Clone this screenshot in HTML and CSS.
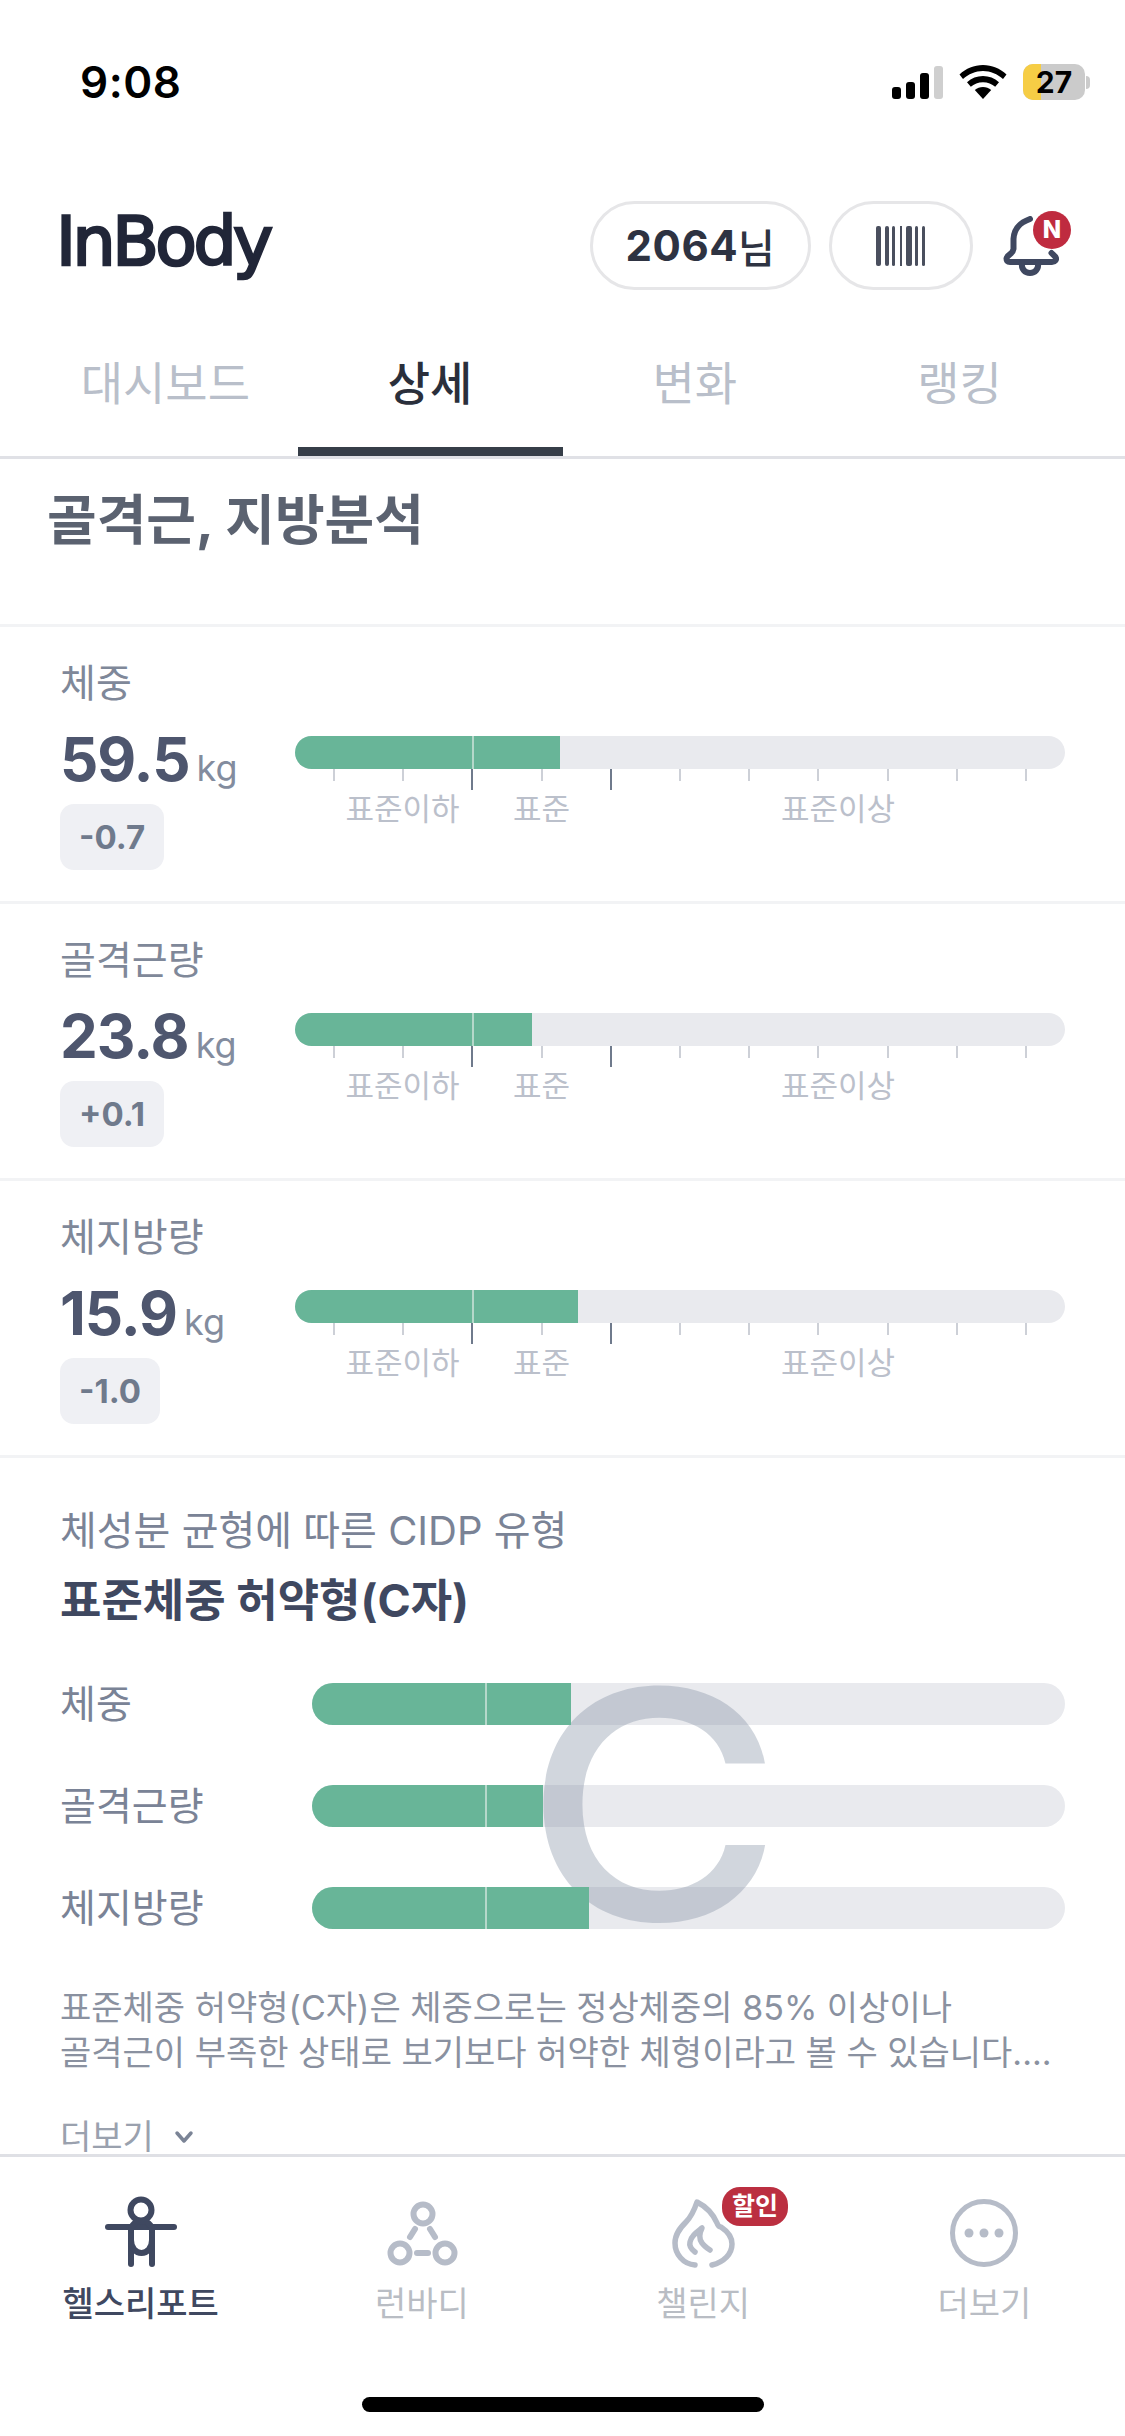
FILE: index.html
```html
<!DOCTYPE html>
<html lang="ko">
<head>
<meta charset="utf-8">
<title>InBody</title>
<link rel="stylesheet" href="styles.css">
</head>
<body>
<div class="screen">
  <div class="status">
    <span class="time">9:08</span>
    <div class="status-icons">
      <svg class="signal" width="52" height="34" viewBox="0 0 52 34"><rect x="0" y="21" width="9" height="12" rx="3"/><rect x="14" y="16" width="9" height="17" rx="3"/><rect x="28" y="7" width="9" height="26" rx="3"/><rect x="42" y="0" width="9" height="33" rx="3" fill="#cfcfcf"/></svg>
      <svg class="wifi" width="48" height="34" viewBox="0 0 48 34"><path d="M24 0C15 0 7 3.500 0.500 9.500L4 14C9.500 9 16.500 6 24 6S38.500 9 44 14L47.500 9.500C41 3.500 33 0 24 0Z"/><path d="M24 11C18 11 12.500 13.200 8 17.300L11.800 21.800C15 19 19.300 17.200 24 17.200S33 19 36.200 21.800L40 17.300C35.500 13.200 30 11 24 11Z"/><path d="M24 22C21 22 18 23 15.800 25L24 34L32.200 25C30 23 27 22 24 22Z"/></svg>
      <div class="battery"><span class="battery-level"></span><span class="battery-num">27</span></div>
      <span class="battery-cap"></span>
    </div>
  </div>

  <header class="top">
    <span class="logo">InBody</span>
    <div class="top-actions">
      <div class="pill pill-name">2064<span class="pill-suffix">님</span></div>
      <div class="pill pill-code">
        <svg width="50" height="40" viewBox="0 0 50 40"><g fill="#4a4f5e"><rect x="0" y="0" width="5" height="40" rx="2"/><rect x="9" y="0" width="4" height="40" rx="2"/><rect x="16" y="0" width="3" height="40" rx="1.500"/><rect x="24" y="0" width="2" height="40"/><rect x="30" y="0" width="6" height="40" rx="2"/><rect x="39" y="0" width="3" height="40" rx="1.500"/><rect x="46" y="0" width="3" height="40" rx="1.500"/></g></svg>
      </div>
      <div class="bell">
        <svg width="56" height="60" viewBox="0 0 56 60" fill="none" stroke="#3f4860" stroke-width="6" stroke-linecap="round" stroke-linejoin="round"><path d="M27 3C16 7 11 13 10.500 23V33C10 38 4 39 3.500 42.500C3.500 45 5 46 7 46H49C52 46 54 43.500 52.500 41C51.500 39.500 50 38.500 48.500 37"/><path d="M19 47C18 53 22 57 27 57S36 53 35 47"/></svg>
        <span class="bell-badge">N</span>
      </div>
    </div>
  </header>

  <nav class="tabs">
    <div class="tab">대시보드</div>
    <div class="tab active">상세</div>
    <div class="tab">변화</div>
    <div class="tab">랭킹</div>
  </nav>

  <main class="content">
    <h1 class="page-title">골격근, 지방분석</h1>

    <section class="metric">
      <div class="metric-label">체중</div>
      <div class="metric-body">
        <div class="metric-left">
          <div class="value"><b>59.5</b><span>kg</span></div>
          <span class="delta">-0.7</span>
        </div>
        <div class="gauge">
          <div class="track"><div class="fill" style="width:265px"></div><span class="mark"></span></div>
          <div class="ticks"><i></i><i></i><i class="major"></i><i></i><i class="major"></i><i></i><i></i><i></i><i></i><i></i><i></i></div>
          <div class="ranges"><span>표준이하</span><span>표준</span><span>표준이상</span></div>
        </div>
      </div>
    </section>

    <section class="metric">
      <div class="metric-label">골격근량</div>
      <div class="metric-body">
        <div class="metric-left">
          <div class="value"><b>23.8</b><span>kg</span></div>
          <span class="delta">+0.1</span>
        </div>
        <div class="gauge">
          <div class="track"><div class="fill" style="width:237px"></div><span class="mark"></span></div>
          <div class="ticks"><i></i><i></i><i class="major"></i><i></i><i class="major"></i><i></i><i></i><i></i><i></i><i></i><i></i></div>
          <div class="ranges"><span>표준이하</span><span>표준</span><span>표준이상</span></div>
        </div>
      </div>
    </section>

    <section class="metric">
      <div class="metric-label">체지방량</div>
      <div class="metric-body">
        <div class="metric-left">
          <div class="value"><b>15.9</b><span>kg</span></div>
          <span class="delta">-1.0</span>
        </div>
        <div class="gauge">
          <div class="track"><div class="fill" style="width:283px"></div><span class="mark"></span></div>
          <div class="ticks"><i></i><i></i><i class="major"></i><i></i><i class="major"></i><i></i><i></i><i></i><i></i><i></i><i></i></div>
          <div class="ranges"><span>표준이하</span><span>표준</span><span>표준이상</span></div>
        </div>
      </div>
    </section>

    <section class="cidp">
      <div class="cidp-label">체성분 균형에 따른 CIDP 유형</div>
      <div class="cidp-title">표준체중 허약형(C자)</div>
      <div class="cidp-chart">
        <div class="cidp-row"><span>체중</span><div class="track track-lg"><div class="fill" style="width:259px"></div><span class="mark"></span></div></div>
        <div class="cidp-row"><span>골격근량</span><div class="track track-lg"><div class="fill" style="width:231px"></div><span class="mark"></span></div></div>
        <div class="cidp-row"><span>체지방량</span><div class="track track-lg"><div class="fill" style="width:277px"></div><span class="mark"></span></div></div>
        <span class="cidp-letter">C</span>
      </div>
      <p class="cidp-desc">표준체중 허약형(C자)은 체중으로는 정상체중의 85% 이상이나<br>골격근이 부족한 상태로 보기보다 허약한 체형이라고 볼 수 있습니다....</p>
      <div class="more">더보기 <svg width="20" height="14" viewBox="0 0 20 14" fill="none" stroke="#7b8496" stroke-width="3.500" stroke-linecap="round" stroke-linejoin="round"><path d="M3 3L10 11L17 3"/></svg></div>
    </section>
  </main>

  <footer class="bottom">
    <div class="nav-item current">
      <svg class="nav-icon" width="80" height="76" viewBox="0 0 80 76" fill="none" stroke="#3f4860" stroke-width="6" stroke-linecap="round" stroke-linejoin="round"><circle cx="40" cy="16" r="10.500"/><path d="M7 33H73"/><path d="M30 36V70"/><path d="M51 36V70"/><path d="M30 36C30 31 35 27 40.500 27S51 31 51 36"/><path d="M30 46C30 54 35 59 40.500 59S51 54 51 46"/></svg>
      <span>헬스리포트</span>
    </div>
    <div class="nav-item">
      <svg class="nav-icon" width="80" height="76" viewBox="0 0 80 76" fill="none" stroke="#b6bcc8" stroke-width="6" stroke-linecap="round"><circle cx="41" cy="20" r="9.500"/><circle cx="18" cy="59" r="9.500"/><circle cx="63" cy="59" r="9.500"/><path d="M33 35L28 43"/><path d="M48 35L53 43"/><path d="M35 59H46"/></svg>
      <span>런바디</span>
    </div>
    <div class="nav-item">
      <div class="nav-icon-wrap">
        <svg class="nav-icon" width="80" height="76" viewBox="0 0 80 76" fill="none" stroke="#b6bcc8" stroke-width="5.500" stroke-linecap="round" stroke-linejoin="round"><path d="M32 71C20 70 12 60 12 49C12 40 17 34 23 28C28 23 31 17 34 8C42 12 50 20 54 29C55 32 56 33 58 33C64 37 69 42 69 50C69 60 61 68 49 71"/><path d="M32 58C28 55 26 52 27 48C28 42 34 38 39 34C36 40 36 45 39 49C41 52 44 54 47 56"/></svg>
        <span class="sale">할인</span>
      </div>
      <span>챌린지</span>
    </div>
    <div class="nav-item">
      <svg class="nav-icon" width="80" height="76" viewBox="0 0 80 76" fill="none" stroke="#b6bcc8" stroke-width="5"><circle cx="40" cy="39" r="31.500"/><g fill="#b6bcc8" stroke="none"><circle cx="25" cy="39" r="4.500"/><circle cx="40" cy="39" r="4.500"/><circle cx="55" cy="39" r="4.500"/></g></svg>
      <span>더보기</span>
    </div>
  </footer>
  <div class="home"><span class="home-bar"></span></div>
</div>
</body>
</html>
```
FILE: styles.css
```css
* { box-sizing: border-box; }
html, body { margin: 0; padding: 0; background: #fff; }
body { font-family: Inter, "Noto Sans CJK KR", "Noto Sans", sans-serif; }
.screen { width: 1125px; height: 2436px; display: flex; flex-direction: column; overflow: hidden; background: #fff; }

.status { height: 163px; flex: none; padding: 60px 35px 0 80px; display: flex; justify-content: space-between; align-items: flex-start; }
.time { font-family: Inter, sans-serif; font-weight: 600; font-size: 44px; line-height: 44px; color: #000; letter-spacing: 0.5px; }
.status-icons { display: flex; align-items: flex-start; padding-top: 4px; }
.signal { margin-top: 2px; fill: #000; }
.wifi { margin: 1px 16px 0 15px; fill: #000; }
.battery { position: relative; width: 62px; height: 36px; border-radius: 10px; background: #cbcbcb; overflow: hidden; display: flex; align-items: center; justify-content: center; }
.battery-level { position: absolute; left: 0; top: 0; bottom: 0; width: 18px; background: #f6cd45; }
.battery-num { position: relative; font-weight: 700; font-size: 30px; line-height: 36px; color: #000; }
.battery-cap { width: 4px; height: 13px; margin: 12px 0 0 1px; background: #cbcbcb; border-radius: 0 6px 6px 0; }

.top { height: 127px; flex: none; margin-top: 19px; padding: 0 66px 0 56px; display: flex; justify-content: space-between; align-items: center; }
.logo { font-family: "DejaVu Sans", sans-serif; font-weight: 400; font-size: 68px; line-height: 70px; margin-top: -8px; color: #212638; letter-spacing: -3.500px; -webkit-text-stroke: 2.500px #212638; }
.top-actions { display: flex; align-items: center; }
.pill { height: 89px; border: 3px solid #e6e6e8; border-radius: 45px; display: flex; align-items: center; justify-content: center; color: #2e3342; }
.pill-name { width: 221px; font-weight: 700; font-size: 42px; margin-right: 18px; letter-spacing: 0.5px; }
.pill-suffix { font-weight: 500; font-size: 40px; }
.pill-code { width: 144px; margin-right: 30px; }
.bell { position: relative; width: 56px; height: 60px; }
.bell svg { display: block; }
.bell-badge { position: absolute; left: 30px; top: -5px; width: 38px; height: 38px; border-radius: 50%; background: #bf2b3f; color: #fff; font-weight: 800; font-size: 24px; line-height: 38px; text-align: center; }

.tabs { height: 150px; flex: none; padding: 0 33px; display: grid; grid-template-columns: repeat(4, 1fr); border-bottom: 3px solid #e0e1e6; }
.tab { height: 147px; text-align: center; font-size: 46px; line-height: 148px; color: #b9bfca; }
.tab.active { color: #2a2f3b; font-weight: 500; border-bottom: 9px solid #363e48; }

.content { flex: 1; min-height: 0; overflow: hidden; }
.page-title { margin: 0; height: 168px; padding: 32px 0 0 47px; font-size: 54px; line-height: 60px; font-weight: 700; color: #5b6270; border-bottom: 3px solid #f2f3f5; }

.metric { height: 277px; padding: 33px 60px 0; border-bottom: 3px solid #f2f3f5; }
.metric-label { font-size: 39px; line-height: 46px; color: #7f8899; }
.metric-body { display: flex; margin-top: 20px; }
.metric-left { width: 235px; flex: none; }
.value { height: 66px; display: flex; align-items: baseline; white-space: nowrap; }
.value b { font-size: 60px; line-height: 66px; font-weight: 700; color: #4e566e; letter-spacing: -1px; }
.value span { margin-left: 7px; font-size: 36px; color: #838c9e; }
.delta { display: block; width: fit-content; margin-top: 12px; height: 66px; padding: 0 19px; border-radius: 14px; background: #eff0f4; color: #6f7a8c; font-weight: 700; font-size: 33px; line-height: 66px; }

.gauge { width: 770px; flex: none; margin-top: 10px; }
.track { position: relative; height: 33px; border-radius: 17px; background: #e9eaee; overflow: hidden; }
.fill { position: relative; z-index: 2; height: 100%; background: #68b598; }
.mark { position: absolute; z-index: 3; left: 177px; top: 0; bottom: 0; width: 2px; background: #b5d8ca; }
.ticks { display: flex; justify-content: space-between; align-items: flex-start; padding: 0 38px; }
.ticks i { display: block; width: 2px; height: 12px; background: #cdd0d7; }
.ticks i.major { height: 21px; background: #6f7a8c; }
.ranges { display: grid; grid-template-columns: 139px 139px 1fr; padding-left: 38px; margin-top: 1px; font-size: 31px; line-height: 36px; color: #bbc0cb; text-align: center; }

.cidp { padding: 47px 60px 0; position: relative; }
.cidp-label { font-size: 40px; line-height: 52px; color: #7a8396; }
.cidp-title { margin-top: 16px; font-size: 45px; line-height: 56px; font-weight: 700; color: #3f4860; }
.cidp-chart { position: relative; margin-top: 54px; display: flex; flex-direction: column; gap: 60px; }
.cidp-row { display: flex; align-items: center; height: 42px; font-size: 39px; line-height: 42px; color: #7a8396; }
.cidp-row span:first-child { width: 252px; flex: none; }
.track-lg { flex: 1; height: 42px; border-radius: 21px; }
.track-lg .mark { left: 173px; }
.cidp-letter { position: absolute; z-index: 1; left: 464px; top: -37px; font-family: Inter, sans-serif; font-size: 318px; line-height: 318px; color: rgba(128, 142, 160, 0.36); font-weight: 500; transform: scaleX(1.11); transform-origin: left center; pointer-events: none; }
.cidp-desc { margin: 56px 0 0; font-size: 34px; line-height: 45px; color: #8a91a0; white-space: nowrap; }
.more { margin-top: 40px; display: flex; align-items: center; gap: 20px; font-size: 34px; line-height: 44px; color: #9aa1ae; }

.bottom { height: 282px; flex: none; border-top: 3px solid #dfe0e5; display: grid; grid-template-columns: repeat(4, 1fr); padding-top: 37px; }
.nav-item { display: flex; flex-direction: column; align-items: center; font-size: 34px; line-height: 42px; color: #b9bdc4; }
.nav-item.current { color: #3f4860; font-weight: 500; }
.nav-icon { display: block; margin-bottom: 13px; }
.nav-icon-wrap { position: relative; }
.sale { position: absolute; left: 59px; top: -7px; width: 66px; height: 39px; border-radius: 18px; background: #bb2f40; color: #fff; font-size: 25px; font-weight: 700; line-height: 39px; text-align: center; }

.home { height: 39px; flex: none; margin-top: -39px; display: flex; justify-content: center; }
.home-bar { width: 402px; height: 15px; margin-top: 0; border-radius: 8px; background: #000; }
```
